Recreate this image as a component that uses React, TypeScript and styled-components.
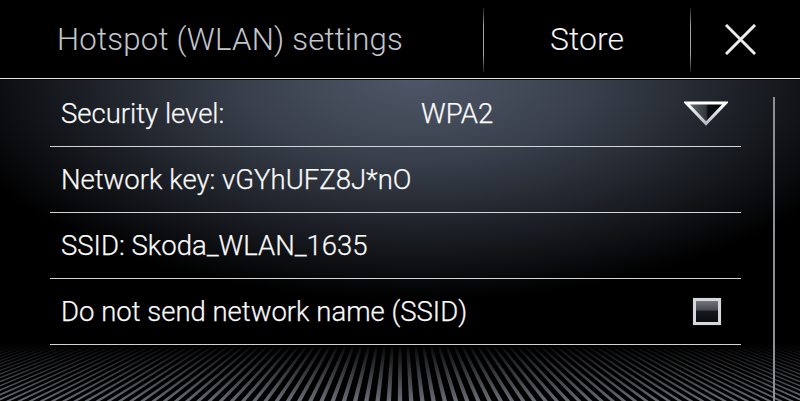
import React from 'react';
import styled, { createGlobalStyle } from 'styled-components';

const Global = createGlobalStyle`
  html, body { margin: 0; padding: 0; background: #000; }
  body {
    width: 800px; height: 401px; overflow: hidden;
    font-family: Roboto, "Liberation Sans", sans-serif;
    -webkit-font-smoothing: antialiased;
  }
`;

const Screen = styled.div`
  width: 800px;
  height: 401px;
  display: flex;
  flex-direction: column;
  background: #000;
  overflow: hidden;
`;

const Header = styled.header`
  height: 78px;
  flex: none;
  display: flex;
  align-items: stretch;
  border-bottom: 1px solid #e4e6e8;
`;

const Title = styled.div`
  width: 483px;
  box-sizing: border-box;
  padding-left: 57px;
  display: flex;
  align-items: center;
  font-size: 31.2px;
  font-weight: 300;
  color: #c2c6cc;
  letter-spacing: 0.2px;
`;

const Divider = styled.div`
  width: 1px;
  margin: 8px 0 6px;
  background: linear-gradient(to bottom, rgba(160,164,170,0.2), #a4a8ae 30%, #a4a8ae 70%, rgba(160,164,170,0.2));
`;

const HeaderButton = styled.div<{ $w: number; $shift?: number }>`
  width: ${p => p.$w}px;
  display: flex;
  align-items: center;
  justify-content: center;
  padding-right: ${p => p.$shift ?? 0}px;
  box-sizing: border-box;
  font-size: 32px;
  font-weight: 300;
  color: #f4f4f4;
`;

const Body = styled.main`
  flex: 1;
  position: relative;
  display: flex;
  align-items: stretch;
  border-top: 1px solid #06080b;
  background:
    radial-gradient(ellipse 480px 220px at 52% 0%, #4e5667 0%, #3a414d 35%, #191c22 72%, rgba(0,0,0,0) 100%),
    #000;
`;

const Floor = styled.svg`
  position: absolute;
  left: 0;
  bottom: 0;
  width: 800px;
  height: 56px;
  z-index: 0;
`;

const List = styled.div`
  position: relative;
  z-index: 1;
  margin-left: 50px;
  width: 691px;
  padding-top: 1px;
  display: flex;
  flex-direction: column;
`;

const Row = styled.div`
  height: 66px;
  box-sizing: border-box;
  border-bottom: 1px solid #d2d4d6;
  display: flex;
  align-items: center;
  padding-left: 11px;
  padding-right: 20px;
  font-size: 27.5px;
  font-weight: 300;
  color: #fafafa;
  -webkit-text-stroke: 0.25px #fafafa;
`;

const Label = styled.span<{ $w?: number }>`
  flex: ${p => (p.$w ? 'none' : '1')};
  width: ${p => (p.$w ? `${p.$w}px` : 'auto')};
  white-space: nowrap;
`;

const Value = styled.span`
  flex: 1;
`;

const DropIcon = styled.svg`
  margin-right: -7px;
  flex: none;
`;

const Check = styled.div`
  width: 28px;
  height: 27px;
  box-sizing: border-box;
  border: 3px solid #d6d8db;
  background: linear-gradient(to bottom, #72757c 0%, #484b52 42%, #15181d 50%, #0b0d11 100%);
  box-shadow: 0 0 1px rgba(255,255,255,0.3);
`;

const ScrollTrack = styled.div`
  position: relative;
  z-index: 1;
  width: 2px;
  margin-left: 32px;
  margin-top: 17px;
  background: #8c9096;
`;

function FloorStripes() {
  const vx = 400, vy = -125, h = 56;
  const polys: string[] = [];
  const s = 11.2;
  for (let k = -64; k <= 64; k++) {
    const x = vx + k * s;
    polys.push(`${vx},${vy} ${x - 2.2},${h} ${x + 2.2},${h}`);
  }
  return (
    <Floor viewBox="0 0 800 56" preserveAspectRatio="none">
      <defs>
        <linearGradient id="fade" x1="0" y1="0" x2="0" y2="1">
          <stop offset="0" stopColor="#000" stopOpacity="1" />
          <stop offset="0.1" stopColor="#000" stopOpacity="0.85" />
          <stop offset="1" stopColor="#000" stopOpacity="0" />
        </linearGradient>
      </defs>
      {polys.map((p, i) => (
        <polygon key={i} points={p} fill="#676b72" />
      ))}
      <rect x="0" y="0" width="800" height="56" fill="url(#fade)" />
    </Floor>
  );
}

export default function App() {
  return (
    <>
      <Global />
      <Screen>
        <Header>
          <Title>Hotspot (WLAN) settings</Title>
          <Divider />
          <HeaderButton $w={206}>Store</HeaderButton>
          <Divider />
          <HeaderButton $w={109} $shift={10}>
            <svg width="31" height="31" viewBox="0 0 31 31">
              <path d="M2 2 L29 29 M29 2 L2 29" stroke="#ececec" strokeWidth="3" strokeLinecap="square" fill="none" />
            </svg>
          </HeaderButton>
        </Header>
        <Body>
          <FloorStripes />
          <List>
            <Row>
              <Label $w={360}>Security level:</Label>
              <Value>WPA2</Value>
              <DropIcon width="44" height="25" viewBox="0 0 44 25">
                <defs>
                  <linearGradient id="tri" x1="0" y1="0" x2="1" y2="0">
                    <stop offset="0" stopColor="#6a6e76" />
                    <stop offset="0.5" stopColor="#33363c" />
                    <stop offset="0.55" stopColor="#0c0d10" />
                    <stop offset="1" stopColor="#000" />
                  </linearGradient>
                  <linearGradient id="triStroke" x1="0" y1="0" x2="0" y2="1">
                    <stop offset="0" stopColor="#ffffff" />
                    <stop offset="1" stopColor="#b8bcc2" />
                  </linearGradient>
                </defs>
                <polygon points="2.5,2 41.5,2 22,22.5" fill="url(#tri)" stroke="url(#triStroke)" strokeWidth="3.2" strokeLinejoin="miter" />
              </DropIcon>
            </Row>
            <Row>
              <Label>Network key: vGYhUFZ8J*nO</Label>
            </Row>
            <Row>
              <Label>SSID: Skoda_WLAN_1635</Label>
            </Row>
            <Row>
              <Label>Do not send network name (SSID)</Label>
              <Check />
            </Row>
          </List>
          <ScrollTrack />
        </Body>
      </Screen>
    </>
  );
}
